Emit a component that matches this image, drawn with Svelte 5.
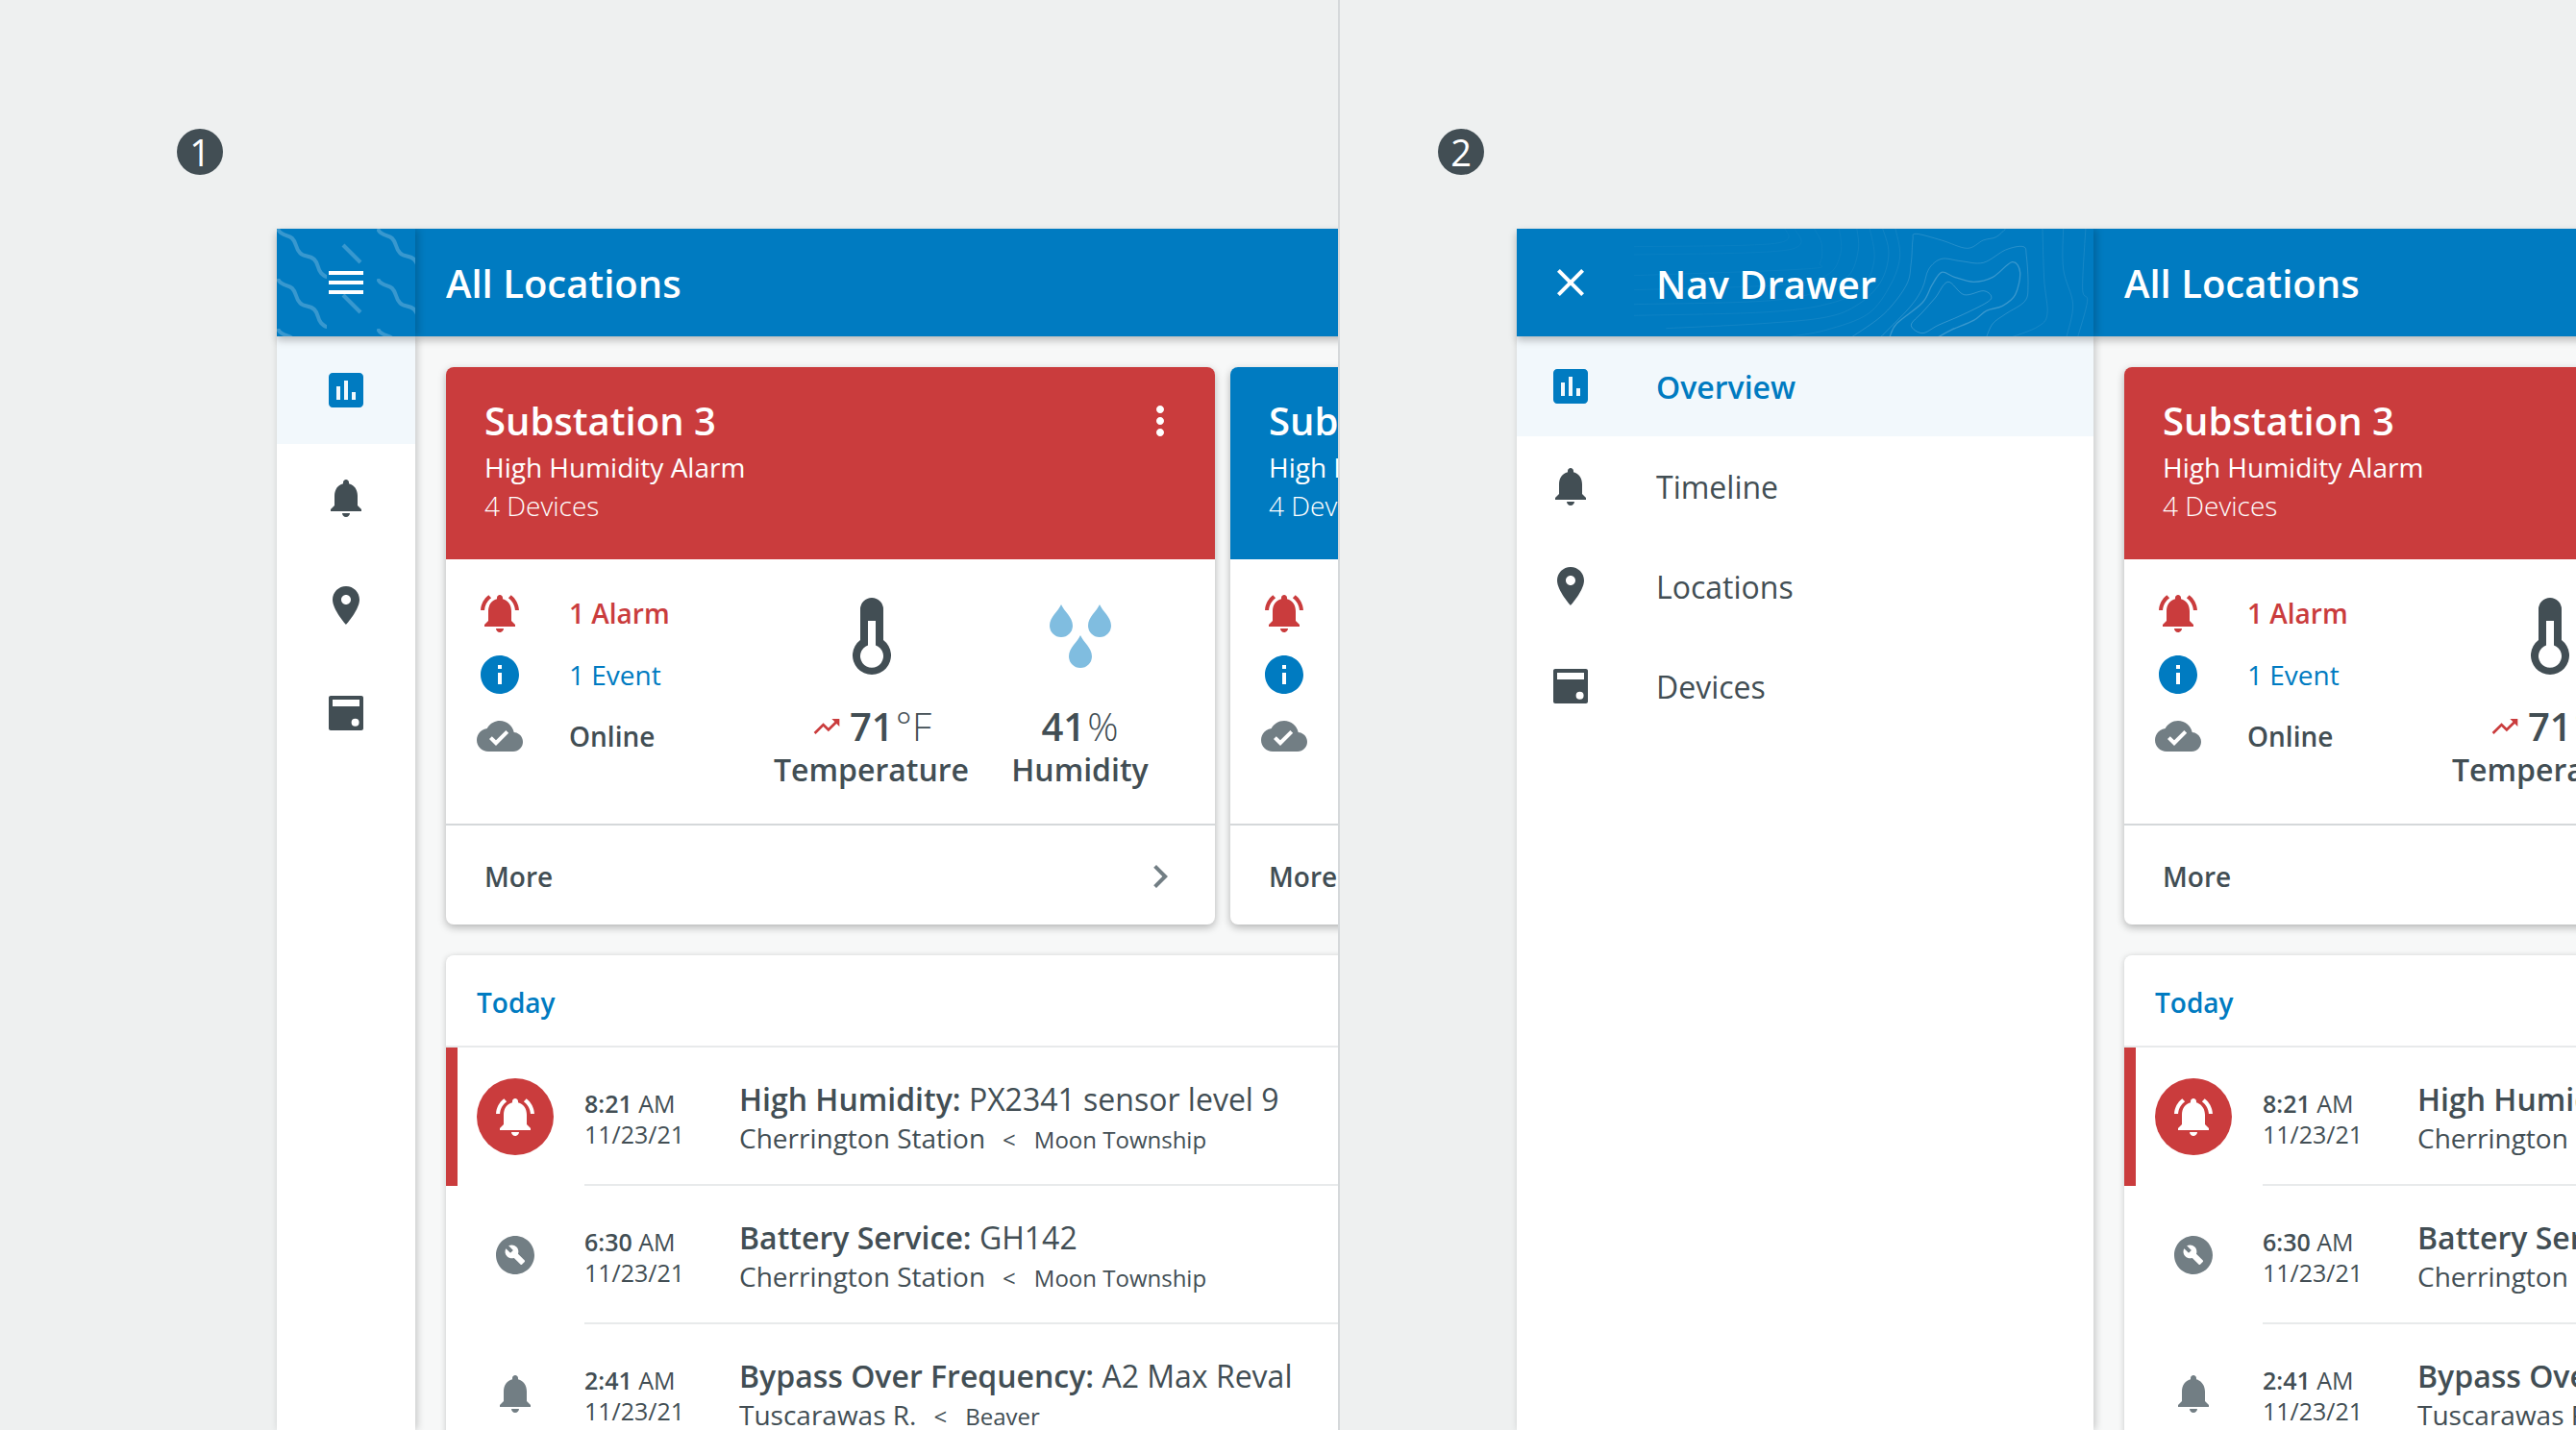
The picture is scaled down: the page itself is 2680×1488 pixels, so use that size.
<script>
  const icons = {
    menu: "M3 18h18v-2H3v2zm0-5h18v-2H3v2zm0-7v2h18V6H3z",
    close: "M19 6.41L17.59 5 12 10.59 6.41 5 5 6.41 10.59 12 5 17.59 6.41 19 12 13.41 17.59 19 19 17.59 13.41 12 19 6.41z",
    chart: "M19 3H5c-1.1 0-2 .9-2 2v14c0 1.1.9 2 2 2h14c1.1 0 2-.9 2-2V5c0-1.1-.9-2-2-2zM9 17H7v-7h2v7zm4 0h-2V7h2v10zm4 0h-2v-4h2v4z",
    bell: "M12 22c1.1 0 2-.9 2-2h-4c0 1.1.89 2 2 2zm6-6v-5c0-3.07-1.64-5.64-4.5-6.32V4c0-.83-.67-1.5-1.5-1.5s-1.5.67-1.5 1.5v.68C7.63 5.36 6 7.92 6 11v5l-2 2v1h16v-1l-2-2z",
    pin: "M12 2C8.13 2 5 5.13 5 9c0 5.25 7 13 7 13s7-7.75 7-13c0-3.87-3.13-7-7-7zm0 9.5c-1.38 0-2.5-1.12-2.5-2.5s1.12-2.5 2.5-2.5 2.5 1.12 2.5 2.5-1.12 2.5-2.5 2.5z",
    device: "M4 3h16c.55 0 1 .45 1 1v16c0 .55-.45 1-1 1H4c-.55 0-1-.45-1-1V4c0-.55.45-1 1-1zm1 2v3.5h14V5H5zm11.8 9.9a2 2 0 1 0 0 4 2 2 0 0 0 0-4z",
    alarm: "M7.58 4.08L6.15 2.65C3.75 4.48 2.17 7.3 2.03 10.5h2c.15-2.65 1.51-4.97 3.55-6.42zm12.39 6.42h2c-.15-3.2-1.73-6.02-4.12-7.85l-1.42 1.43c2.02 1.45 3.39 3.77 3.54 6.42zM18 11c0-3.07-1.64-5.64-4.5-6.32V4c0-.83-.67-1.5-1.5-1.5s-1.5.67-1.5 1.5v.68C7.63 5.36 6 7.92 6 11v5l-2 2v1h16v-1l-2-2v-5zm-6 11c.14 0 .27-.01.4-.04.65-.14 1.18-.58 1.44-1.18.1-.24.15-.5.15-.78h-4c.01 1.1.9 2 2.01 2z",
    info: "M12 2C6.48 2 2 6.48 2 12s4.48 10 10 10 10-4.48 10-10S17.52 2 12 2zm1 15h-2v-6h2v6zm0-8h-2V7h2v2z",
    cloud: "M19.35 10.04C18.67 6.59 15.64 4 12 4 9.11 4 6.6 5.64 5.35 8.04 2.34 8.36 0 10.91 0 14c0 3.31 2.69 6 6 6h13c2.76 0 5-2.24 5-5 0-2.64-2.05-4.78-4.65-4.96zM10 17l-3.5-3.5 1.41-1.41L10 14.17 15.18 9l1.41 1.41L10 17z",
    wrench: "M12 2C6.48 2 2 6.48 2 12s4.48 10 10 10 10-4.48 10-10S17.52 2 12 2zm4.9 13.49l-1.4 1.4c-.2.2-.51.2-.71 0l-3.41-3.41c-1.22.43-2.64.17-3.62-.81-1.11-1.11-1.3-2.79-.59-4.1l2.35 2.35 1.41-1.41-2.35-2.34c1.32-.71 2.99-.52 4.1.59.98.98 1.24 2.4.81 3.62l3.41 3.41c.2.2.2.51 0 .7z",
    trend: "M16 6l2.29 2.29-4.88 4.88-4-4L2 16.59 3.41 18l6-6 4 4 6.3-6.29L22 12V6z",
    dots: "M12 8c1.1 0 2-.9 2-2s-.9-2-2-2-2 .9-2 2 .9 2 2 2zm0 2c-1.1 0-2 .9-2 2s.9 2 2 2 2-.9 2-2-.9-2-2-2zm0 6c-1.1 0-2 .9-2 2s.9 2 2 2 2-.9 2-2-.9-2-2-2z",
    chevron: "M10 6L8.59 7.41 13.17 12l-4.58 4.59L10 18l6-6z"
  };

  const navItems = [
    { icon: "chart", label: "Overview", active: true },
    { icon: "bell", label: "Timeline" },
    { icon: "pin", label: "Locations" },
    { icon: "device", label: "Devices" }
  ];

  const cards = [
    { name: "Substation 3", tone: "red", menu: true },
    { name: "Substation 4", tone: "blue", menu: true }
  ];

  const events = [
    { kind: "alarm", time: "8:21", title: "High Humidity:", detail: "PX2341 sensor level 9", place: "Cherrington Station", area: "Moon Township" },
    { kind: "service", time: "6:30", title: "Battery Service:", detail: "GH142", place: "Cherrington Station", area: "Moon Township" },
    { kind: "event", time: "2:41", title: "Bypass Over Frequency:", detail: "A2 Max Reval", place: "Tuscarawas R.", area: "Beaver" }
  ];

  // contour lines of the drawer header, traced from the screenshot
  const contours = [
    { o: 0.2, w: 3, closed: true, p: [[680,190],[640,240],[600,285],[565,325],[600,350],[650,325],[720,295],[800,255],[815,235],[790,218],[730,230]] },
    { o: 0.22, w: 4, p: [[498,362],[520,320],[600,255],[630,200],[660,160],[700,175],[760,190],[820,175],[880,128],[905,160],[890,230],[850,265],[800,280],[760,310],[690,340],[650,362]] },
    { o: 0.16, w: 3, p: [[470,362],[560,270],[600,210],[620,150],[660,118],[720,125],[790,130],[860,90],[915,80],[925,110],[930,200],[920,250],[860,290],[820,320],[800,362]] },
    { o: 0.14, w: 3, p: [[380,362],[480,290],[550,200],[565,130],[570,60],[580,40],[660,60],[740,85],[790,60],[830,50],[860,24]] },
    { o: 0.14, w: 2, p: [[975,20],[980,180],[990,290],[960,330],[880,362]] },
    { o: 0.14, w: 2, p: [[1040,20],[1040,150],[1070,260],[1050,362]] },
    { o: 0.14, w: 2, p: [[1110,20],[1100,210],[1115,250],[1085,362]] },
    { o: 0.1, w: 2, p: [[515,20],[530,110],[500,200],[430,290],[300,340],[180,362]] },
    { o: 0.1, w: 2, p: [[475,20],[495,100],[470,190],[400,260],[300,300],[100,320],[-200,335]] },
    { o: 0.08, w: 2, p: [[435,20],[450,120],[410,210],[300,260],[100,285],[-300,295]] },
    { o: 0.08, w: 2, p: [[395,20],[400,90],[370,170],[280,220],[100,250],[-300,260]] },
    { o: 0.06, w: 2, p: [[340,20],[345,100],[300,170],[150,200],[-300,215]] },
    { o: 0.06, w: 2, p: [[260,20],[285,70],[280,130],[230,150],[-300,170]] },
    { o: 0.05, w: 2, p: [[200,20],[180,90],[-300,105]] },
    { o: 0.05, w: 2, p: [[170,20],[140,70],[-300,80]] }
  ];

  // smooth a list of points into a path
  const smooth = (p, closed) => {
    const at = (i) => closed ? p[(i + p.length) % p.length] : p[Math.max(0, Math.min(p.length - 1, i))];
    let d = `M${p[0][0]} ${p[0][1]}`;
    const last = closed ? p.length : p.length - 1;
    for (let i = 0; i < last; i++) {
      const [a, b, c, e] = [at(i - 1), at(i), at(i + 1), at(i + 2)];
      d += ` C${b[0] + (c[0] - a[0]) / 6} ${b[1] + (c[1] - a[1]) / 6} ${c[0] - (e[0] - b[0]) / 6} ${c[1] - (e[1] - b[1]) / 6} ${c[0]} ${c[1]}`;
    }
    return d;
  };
</script>

{#snippet icon(name, cls = "")}
  <svg class="icon {cls}" viewBox="0 0 24 24" aria-hidden="true"><path d={icons[name]} /></svg>
{/snippet}

{#snippet content()}
  <main class="content">
    <div class="cards">
      {#each cards as card}
        <article class="card">
          <div class="card-head {card.tone}">
            <div class="card-titles">
              <h2>{card.name}</h2>
              <p class="alarm-line">High Humidity Alarm</p>
              <p class="device-line">4 Devices</p>
            </div>
            {@render icon("dots", "white")}
          </div>
          <div class="card-body">
            <ul class="status">
              <li class="red-text">{@render icon("alarm")}<span>1 Alarm</span></li>
              <li class="blue-text">{@render icon("info")}<span>1 Event</span></li>
              <li class="grey-icon">{@render icon("cloud")}<span>Online</span></li>
            </ul>
            <div class="stat">
              <div class="stat-icon">
                <svg width="40" height="80" viewBox="0 0 40 80" aria-hidden="true">
                  <path class="thermo" fill-rule="evenodd" d="M8 12a12 12 0 0 1 24 0v32a20 20 0 1 1-24 0zM16 24v25.5a12 12 0 1 0 8 0V24z" />
                </svg>
              </div>
              <div class="value"><span class="trend">{@render icon("trend")}</span><b>71</b><i>°F</i></div>
              <div class="stat-label">Temperature</div>
            </div>
            <div class="stat">
              <div class="stat-icon">
                <svg width="64" height="66" viewBox="0 0 64 66" aria-hidden="true">
                  <path class="drop" d="M12 0C15 7 24 13 24 22A12 12 0 0 1 0 22C0 13 9 7 12 0Z" />
                  <path class="drop" transform="translate(40 0)" d="M12 0C15 7 24 13 24 22A12 12 0 0 1 0 22C0 13 9 7 12 0Z" />
                  <path class="drop" transform="translate(20 32)" d="M12 0C15 7 24 13 24 22A12 12 0 0 1 0 22C0 13 9 7 12 0Z" />
                </svg>
              </div>
              <div class="value"><b>41</b><i>%</i></div>
              <div class="stat-label">Humidity</div>
            </div>
          </div>
          <div class="card-more">
            <span>More</span>
            {@render icon("chevron", "grey")}
          </div>
        </article>
      {/each}
    </div>

    <section class="timeline">
      <h3>Today</h3>
      {#each events as ev}
        <div class="row {ev.kind}">
          <div class="row-icon">
            {#if ev.kind === "alarm"}
              <span class="alarm-dot">{@render icon("alarm", "white")}</span>
            {:else if ev.kind === "service"}
              {@render icon("wrench", "grey")}
            {:else}
              {@render icon("bell", "grey")}
            {/if}
          </div>
          <div class="row-body">
            <div class="when">
              <div><b>{ev.time}</b> AM</div>
              <div>11/23/21</div>
            </div>
            <div class="what">
              <div class="what-title"><b>{ev.title}</b> {ev.detail}</div>
              <div class="what-sub"><span class="place">{ev.place}</span><span class="lt">&lt;</span><span class="area">{ev.area}</span></div>
            </div>
          </div>
        </div>
      {/each}
    </section>
  </main>
{/snippet}

<div class="page">
  <section class="panel first">
    <div class="badge">1</div>
    <div class="frame">
      <header class="topbar">
        <div class="tile">
          <svg class="wave" width="144" height="112" aria-hidden="true">
            <defs>
              <pattern id="waves" width="104" height="52" patternUnits="userSpaceOnUse">
                <path d="M1 0C4 8 12 6 16 10C21 15 19 20 24 25C28 30 34 27 39 32C44 37 42 42 46 46C48 48 50 50 52 50" />
                <path d="M69 17L87 35" />
              </pattern>
            </defs>
            <rect width="144" height="112" fill="url(#waves)" />
          </svg>
          {@render icon("menu", "white")}
        </div>
        <h1>All Locations</h1>
      </header>
      <div class="body">
        <nav class="rail">
          {#each navItems as item}
            <div class="rail-item" class:active={item.active}>{@render icon(item.icon)}</div>
          {/each}
        </nav>
        {@render content()}
      </div>
    </div>
  </section>

  <section class="panel second">
    <div class="badge">2</div>
    <div class="frame">
      <header class="topbar">
        <div class="drawer-head">
          <svg class="topo" width="600" height="112" viewBox="0 0 600 112" aria-hidden="true">
            <g transform="translate(222 -8) scale(0.3333)">
              {#each contours as c}
                <path d={smooth(c.p, c.closed)} stroke-width={c.w} stroke-opacity={c.o} />
              {/each}
            </g>
          </svg>
          <div class="drawer-title">
            {@render icon("close", "white")}
            <span>Nav Drawer</span>
          </div>
        </div>
        <h1>All Locations</h1>
      </header>
      <div class="body">
        <nav class="drawer">
          {#each navItems as item}
            <div class="drawer-item" class:active={item.active}>
              {@render icon(item.icon)}
              <span>{item.label}</span>
            </div>
          {/each}
        </nav>
        {@render content()}
      </div>
    </div>
  </section>
</div>

<style>
  :global(body) {
    margin: 0;
    background: #eef0f0;
  }

  .page {
    width: 2680px;
    height: 1488px;
    display: flex;
    overflow: hidden;
    font-family: "Open Sans", "Noto Sans", sans-serif;
    color: #424e54;
    background: #eef0f0;
  }

  .panel {
    height: 1488px;
    box-sizing: border-box;
    padding-top: 134px;
    overflow: hidden;
    flex-shrink: 0;
  }

  .panel.first {
    width: 1394px;
    border-right: 2px solid #d5d8da;
    padding-left: 184px;
  }

  .panel.second {
    width: 1286px;
    padding-left: 102px;
  }

  .badge {
    width: 48px;
    height: 48px;
    border-radius: 50%;
    background: #424e54;
    color: #fff;
    font-size: 38px;
    line-height: 48px;
    text-align: center;
    font-weight: 500;
    margin-bottom: 56px;
  }

  .frame {
    height: 1250px;
    width: 2400px;
    display: flex;
    flex-direction: column;
  }

  .first .frame { margin-left: 104px; }
  .second .frame { margin-left: 82px; }

  /* icons */
  .icon {
    width: 48px;
    height: 48px;
    flex-shrink: 0;
    fill: #424e54;
    display: block;
  }

  .icon.white { fill: #fff; }
  .icon.grey { fill: #727e84; }

  /* top bar */
  .topbar {
    height: 112px;
    flex-shrink: 0;
    display: flex;
    background: #007bc1;
    color: #fff;
    position: relative;
    z-index: 3;
    box-shadow: 0 4px 8px rgba(0, 0, 0, 0.25);
  }

  .topbar h1 {
    margin: 0;
    font-size: 40px;
    font-weight: 600;
    line-height: 114px;
    padding-left: 32px;
  }

  .tile {
    width: 144px;
    height: 112px;
    display: grid;
    place-items: center;
    flex-shrink: 0;
    box-shadow: 3px 0 8px rgba(0, 0, 0, 0.2);
    clip-path: inset(0 -20px 0 0);
    background: #007bc1;
  }

  .tile > * {
    grid-area: 1 / 1;
  }

  .wave path {
    fill: none;
    stroke: rgba(255, 255, 255, 0.22);
    stroke-width: 4;
  }

  .drawer-head {
    width: 600px;
    height: 112px;
    display: grid;
    flex-shrink: 0;
    background: #007bc1;
    box-shadow: 3px 0 8px rgba(0, 0, 0, 0.2);
    clip-path: inset(0 -20px 0 0);
  }

  .drawer-head > * {
    grid-area: 1 / 1;
  }

  .topo path {
    fill: none;
    stroke: #fff;
  }

  .drawer-title {
    display: flex;
    align-items: center;
    padding-left: 32px;
    gap: 65px;
    font-size: 40px;
    font-weight: 600;
  }

  .drawer-title span {
    padding-top: 2px;
  }

  /* body */
  .body {
    flex: 1;
    display: flex;
    min-height: 0;
  }

  .rail {
    width: 144px;
    flex-shrink: 0;
    background: #fff;
    box-shadow: 2px 0 8px rgba(0, 0, 0, 0.2);
    position: relative;
    z-index: 2;
  }

  .rail-item {
    height: 112px;
    display: flex;
    align-items: center;
    justify-content: center;
  }

  .rail-item.active,
  .drawer-item.active {
    background: #f2f8fc;
  }

  .rail-item.active .icon,
  .drawer-item.active .icon {
    fill: #007bc1;
  }

  .drawer {
    width: 600px;
    flex-shrink: 0;
    background: #fff;
    box-shadow: 2px 0 8px rgba(0, 0, 0, 0.2);
    position: relative;
    z-index: 2;
  }

  .drawer-item {
    height: 104px;
    display: flex;
    align-items: center;
    gap: 65px;
    padding-left: 32px;
    font-size: 32px;
  }

  .drawer-item.active {
    color: #007bc1;
    font-weight: 600;
  }

  .content {
    flex: 1;
    background: #f7f8f8;
    padding: 32px 0 0 32px;
    display: flex;
    flex-direction: column;
    gap: 32px;
    min-width: 0;
  }

  /* cards */
  .cards {
    display: flex;
    gap: 16px;
  }

  .card {
    width: 800px;
    flex-shrink: 0;
    background: #fff;
    border-radius: 8px;
    box-shadow: 0 3px 8px rgba(0, 0, 0, 0.28);
    overflow: hidden;
  }

  .card-head {
    height: 200px;
    box-sizing: border-box;
    padding: 32px 33px 0 40px;
    display: flex;
    justify-content: space-between;
    align-items: flex-start;
    color: #fff;
  }

  .card-head.red { background: #ca3c3d; }
  .card-head.blue { background: #007bc1; }

  .card-titles h2 {
    margin: 0 0 4px;
    font-size: 40px;
    line-height: 48px;
    font-weight: 600;
  }

  .card-titles p {
    margin: 0;
    font-size: 28px;
    line-height: 40px;
  }

  .device-line {
    font-weight: 300;
  }

  .card-body {
    height: 275px;
    box-sizing: border-box;
    display: flex;
    padding: 24px 32px 0 32px;
  }

  .status {
    flex: 1;
    margin: 0;
    padding: 0;
    list-style: none;
  }

  .status li {
    height: 64px;
    display: flex;
    align-items: center;
    gap: 48px;
    font-size: 28px;
    font-weight: 600;
  }

  .status li.blue-text { font-weight: 500; }

  .red-text { color: #ca3c3d; }
  .red-text .icon { fill: #ca3c3d; }
  .blue-text { color: #007bc1; }
  .blue-text .icon { fill: #007bc1; }
  .grey-icon .icon { fill: #727e84; }

  .stat {
    width: 217px;
    padding-top: 16px;
    text-align: center;
  }

  .stat-icon {
    height: 80px;
    display: flex;
    align-items: center;
    justify-content: center;
    margin-bottom: 34px;
  }

  .thermo { fill: #424e54; }
  .drop { fill: #80bde0; }

  .value {
    font-size: 40px;
    line-height: 40px;
    white-space: nowrap;
    display: flex;
    justify-content: center;
    align-items: center;
  }

  .value b { font-weight: 600; }
  .value i { font-style: normal; font-weight: 300; margin-left: 2px; }

  .trend {
    display: block;
    margin-right: 8px;
  }

  .trend :global(.icon) {
    width: 32px;
    height: 32px;
    fill: #ca3c3d;
  }

  .stat-label {
    font-size: 32px;
    line-height: 36px;
    font-weight: 600;
    margin-top: 7px;
  }

  .card-more {
    height: 105px;
    box-sizing: border-box;
    border-top: 2px solid #d5d8da;
    display: flex;
    align-items: center;
    justify-content: space-between;
    padding: 2px 33px 0 40px;
    font-size: 28px;
    font-weight: 600;
  }

  /* timeline */
  .timeline {
    width: 1616px;
    background: #fff;
    border-radius: 8px 8px 0 0;
    box-shadow: 0 1px 6px rgba(0, 0, 0, 0.2);
    flex: 1;
  }

  .timeline h3 {
    margin: 0;
    height: 96px;
    box-sizing: border-box;
    border-bottom: 2px solid #e8eaeb;
    padding-left: 32px;
    font-size: 28px;
    line-height: 98px;
    font-weight: 600;
    color: #007bc1;
  }

  .row {
    height: 144px;
    display: flex;
  }

  .row.alarm {
    box-shadow: inset 12px 0 0 #ca3c3d;
  }

  .row-icon {
    width: 144px;
    flex-shrink: 0;
    display: flex;
    align-items: center;
    justify-content: center;
  }

  .alarm-dot {
    width: 80px;
    height: 80px;
    border-radius: 50%;
    background: #ca3c3d;
    display: flex;
    align-items: center;
    justify-content: center;
  }

  .row-body {
    flex: 1;
    display: flex;
    align-items: center;
    border-bottom: 2px solid #e8eaeb;
  }

  .when {
    width: 161px;
    flex-shrink: 0;
    font-size: 25px;
    line-height: 32px;
    padding-top: 5px;
  }

  .when b { font-weight: 600; }

  .what {
    padding-top: 6px;
  }

  .what-title {
    font-size: 32px;
    line-height: 42px;
  }

  .what-title b { font-weight: 600; }

  .what-sub {
    font-size: 28px;
    line-height: 38px;
    display: flex;
    align-items: baseline;
  }

  .lt {
    font-size: 24px;
    margin: 0 19px 0 18px;
  }

  .area { font-size: 24px; }
</style>
